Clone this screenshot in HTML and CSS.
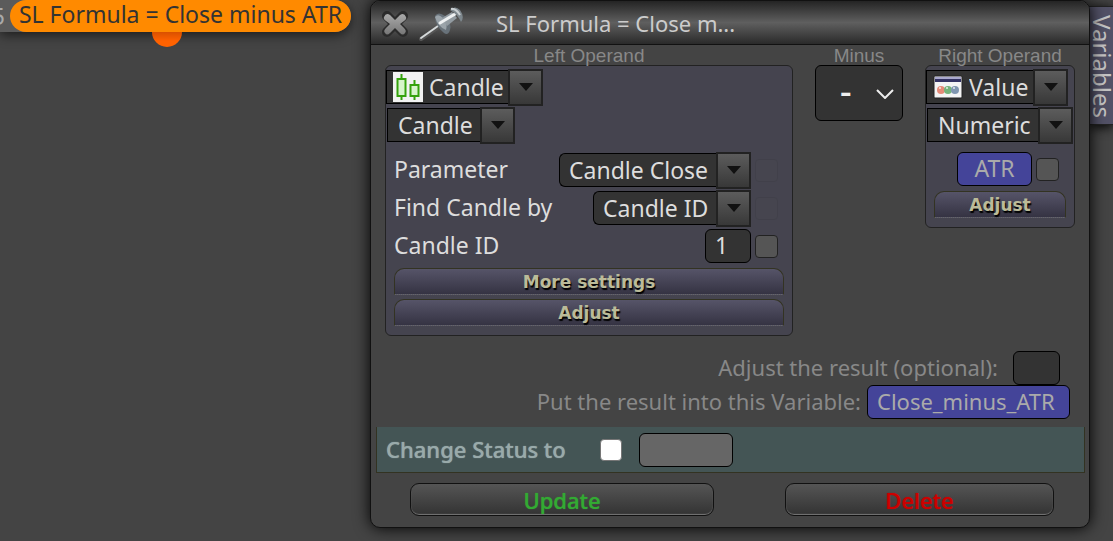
FILE: index.html
```
<!DOCTYPE html>
<html lang="en">
<head>
  <meta charset="UTF-8" />
  <meta name="viewport" content="width=device-width, initial-scale=1" />
  <title>SL Formula = Close minus ATR</title>
  <link rel="stylesheet" href="styles.css">
</head>
<body>
  <!-- block on the canvas -->
  <div class="node">
    <span class="node-number">5</span>
    <span class="node-name">SL Formula = Close minus ATR</span>
    <span class="node-port"></span>
  </div>

  <button class="side-tab">Variables</button>

  <form class="dialog">
    <header class="titlebar">
      <button type="button" class="icon-btn" aria-label="Close">
        <svg width="30" height="32" viewBox="0 0 30 32">
          <defs>
            <linearGradient id="crossFill" x1="0" y1="0" x2="0" y2="1">
              <stop offset="0" stop-color="#aaa" />
              <stop offset="1" stop-color="#777" />
            </linearGradient>
          </defs>
          <path d="M7 9L23 25M23 9L7 25" stroke="#2b2b2b" stroke-width="10" stroke-linecap="round" />
          <path d="M4 10Q6 5 10 8L15 13L20 8Q24 5 26 10Q27 12 24 14L20 17L24 21Q27 24 25 26Q23 29 20 26L15 21L10 26Q7 29 5 26Q3 24 6 21L10 17L6 14Q3 12 4 10Z" fill="url(#crossFill)" />
        </svg>
      </button>
      <button type="button" class="icon-btn" aria-label="Pin">
        <svg width="46" height="36" viewBox="0 0 46 36">
          <path d="M3 34L19 23" stroke="#555" stroke-width="4" stroke-linecap="round" />
          <path d="M3 33L20 21" stroke="#d5d9da" stroke-width="2" stroke-linecap="round" />
          <path d="M17 11Q20 6 27 11Q34 18 32 25Q30 31 26 28Q17 21 17 11Z" fill="#68727a" />
          <path d="M17 12Q20 8 25 13Q30 18 28 25Q20 22 17 12Z" fill="#9aa3a9" />
          <path d="M24 13L34 7L39 13L29 21Z" fill="#929ba1" />
          <path d="M22 18L37 9" stroke="#eef1f2" stroke-width="3" stroke-linecap="round" />
          <path d="M32 5Q37 0 42 5Q47 12 43 17Q40 10 32 5Z" fill="#7d878d" />
          <path d="M33 4Q38 3 42 10" stroke="#c8ced1" stroke-width="2" fill="none" />
        </svg>
      </button>
      <h1 class="title">SL Formula = Close m...</h1>
    </header>

    <div class="operands">
      <section class="operand operand-left">
        <h2 class="caption">Left Operand</h2>
        <div class="panel">
          <div class="combo combo-type">
            <svg width="30" height="30" viewBox="0 0 30 30">
              <rect width="30" height="30" fill="#f2f2f2" />
              <path d="M8.500 2V28M21.500 8V28" stroke="#35a20d" stroke-width="2" />
              <rect x="4.500" y="7" width="8" height="17" fill="#d7f5cb" stroke="#35a20d" stroke-width="2" />
              <rect x="17.500" y="13" width="8" height="11" fill="#d7f5cb" stroke="#35a20d" stroke-width="2" />
            </svg>
            <select class="combo-value" aria-label="Left operand type"><option>Candle</option></select>
            <button type="button" class="combo-arrow" aria-label="Open list"></button>
          </div>
          <div class="combo combo-sub">
            <select class="combo-value" aria-label="Left operand value"><option>Candle</option></select>
            <button type="button" class="combo-arrow" aria-label="Open list"></button>
          </div>

          <div class="fields">
            <div class="field">
              <label for="parameter">Parameter</label>
              <div class="combo rounded">
                <select class="combo-value" id="parameter"><option>Candle Close</option></select>
                <button type="button" class="combo-arrow" aria-label="Open list"></button>
              </div>
              <button type="button" class="var-toggle off" aria-label="Use variable"></button>
            </div>
            <div class="field">
              <label for="findBy">Find Candle by</label>
              <div class="combo rounded">
                <select class="combo-value" id="findBy"><option>Candle ID</option></select>
                <button type="button" class="combo-arrow" aria-label="Open list"></button>
              </div>
              <button type="button" class="var-toggle off" aria-label="Use variable"></button>
            </div>
            <div class="field">
              <label for="candleId">Candle ID</label>
              <input class="box box-id" type="text" id="candleId" value="1" />
              <button type="button" class="var-toggle" aria-label="Use variable"></button>
            </div>
          </div>

          <button type="button" class="bar-btn">More settings</button>
          <button type="button" class="bar-btn">Adjust</button>
        </div>
      </section>

      <section class="operand">
        <h2 class="caption"><label for="operator">Minus</label></h2>
        <div class="operator">
          <select id="operator"><option>-</option></select>
          <svg class="chevron" width="18" height="10" viewBox="0 0 18 10">
            <path d="M1 1L9 9L17 1" fill="none" stroke="#eee" stroke-width="2" />
          </svg>
        </div>
      </section>

      <section class="operand operand-right">
        <h2 class="caption">Right Operand</h2>
        <div class="panel">
          <div class="combo combo-type">
            <svg width="30" height="24" viewBox="0 0 30 24">
              <rect x="1" y="1" width="28" height="22" rx="1" fill="#f4f4f4" stroke="#222" />
              <rect x="2" y="2" width="26" height="2" fill="#aaa9ce" />
              <rect x="2" y="4" width="26" height="3" fill="#343363" />
              <circle cx="8" cy="15" r="4" fill="#e58a78" />
              <circle cx="15" cy="15" r="4" fill="#74b37a" />
              <circle cx="22" cy="15" r="4" fill="#8096b0" />
              <path d="M6 13H8M13 13H15M20 13H22" stroke="#fff" stroke-opacity=".6" stroke-width="2" />
            </svg>
            <select class="combo-value" aria-label="Right operand type"><option>Value</option></select>
            <button type="button" class="combo-arrow" aria-label="Open list"></button>
          </div>
          <div class="combo combo-sub">
            <select class="combo-value" aria-label="Right operand value"><option>Numeric</option></select>
            <button type="button" class="combo-arrow" aria-label="Open list"></button>
          </div>
          <div class="fields">
            <div class="field">
              <input class="box box-var box-atr" type="text" value="ATR" aria-label="Value" />
              <button type="button" class="var-toggle" aria-label="Use variable"></button>
            </div>
          </div>
          <button type="button" class="bar-btn">Adjust</button>
        </div>
      </section>
    </div>

    <div class="results">
      <div class="result-row result-adjust">
        <label for="adjustResult">Adjust the result (optional):</label>
        <input class="box box-adjust" type="text" id="adjustResult" />
      </div>
      <div class="result-row">
        <label for="resultVar">Put the result into this Variable:</label>
        <input class="box box-var box-result" type="text" id="resultVar" value="Close_minus_ATR" />
      </div>
    </div>

    <div class="status">
      <label for="changeStatus">Change Status to</label>
      <input type="checkbox" id="changeStatus" />
      <input class="box box-status" type="text" aria-label="Status" disabled />
    </div>

    <footer class="actions">
      <button type="submit" class="action update">Update</button>
      <button type="button" class="action delete">Delete</button>
    </footer>
  </form>
</body>
</html>
```
FILE: styles.css
```
* {
  box-sizing: border-box;
}
body {
  margin: 0;
  min-height: 100vh;
  background: #444;
  color: #ddd;
  font-family: 'Noto Sans', sans-serif;
  font-size: 23px;
  line-height: 32px;
  overflow: hidden;
}
button,
input,
select {
  font: inherit;
  color: inherit;
  margin: 0;
  padding: 0;
}
h1,
h2 {
  margin: 0;
  font-weight: 400;
}

/* canvas */
.node {
  position: absolute;
  top: 0;
  left: 0;
  display: flex;
  width: 351px;
  height: 32px;
  background: #5b5b5b;
  border-radius: 0 16px 16px 0;
  box-shadow: 0 3px 12px rgba(0, 0, 0, 0.6);
}
.node-number {
  width: 10px;
  color: #aaa;
  direction: rtl;
  padding-right: 5px;
}
.node-name {
  position: relative;
  z-index: 1;
  flex: 1;
  background: #ff8a00;
  color: #333;
  border-radius: 16px;
  line-height: 28px;
  text-align: center;
  white-space: nowrap;
}
.node-port {
  position: absolute;
  top: 32px;
  left: 152px;
  width: 30px;
  height: 15px;
  border-radius: 0 0 15px 15px;
  background: linear-gradient(#d95000, #ff6200 60%);
}
.side-tab {
  position: absolute;
  top: 6px;
  right: 0;
  width: 24px;
  height: 119px;
  border: 1px solid #222;
  border-width: 1px 0;
  background: #525166;
  color: #c5c5c5;
  font-size: 24px;
  line-height: 22px;
  writing-mode: vertical-rl;
  text-align: center;
  padding: 6px 0 4px 2px;
  box-shadow: 0 2px 12px #000;
}

/* dialog */
.dialog {
  position: absolute;
  top: 0;
  left: 370px;
  right: 23px;
  background: #444;
  border: 1px solid #111;
  border-radius: 10px;
  box-shadow: 0 0 16px #000;
}
.titlebar {
  display: flex;
  align-items: center;
  height: 44px;
  padding-left: 9px;
  border-bottom: 1px solid #111;
  border-radius: 9px 9px 0 0;
  background: linear-gradient(#242424, #5f5f5f 50%, #2a2a2a);
}
.icon-btn {
  display: flex;
  margin-right: 8px;
  border: 0;
  background: none;
}
.title {
  margin-left: 24px;
  font-size: 22px;
  color: #ccc;
}
.operands {
  display: flex;
  justify-content: space-between;
  align-items: flex-start;
  padding: 0 14px;
}
.operand-left {
  width: 408px;
}
.operand-right {
  width: 150px;
}
.caption {
  height: 20px;
  font-family: 'Liberation Sans', Arial, sans-serif;
  font-size: 19px;
  line-height: 21px;
  text-align: center;
  color: #888;
}
.panel {
  border: 1px solid #222;
  border-radius: 6px;
  background: #45444f;
  padding: 2px 0 9px;
}

.combo {
  display: flex;
  align-items: center;
  width: max-content;
  height: 38px;
}
.combo-value {
  appearance: none;
  height: 34px;
  border: 1px solid #000;
  border-right: 0;
  background: #333;
  color: #ddd;
  padding: 0 7px 0 10px;
}
.combo-arrow {
  width: 35px;
  height: 37px;
  border: 2px solid #222;
  background: linear-gradient(#5c5c5c, #383838);
  display: grid;
  place-items: center;
}
.combo-arrow::before {
  content: '';
  border: 7px solid transparent;
  border-top: 8px solid #111;
  border-bottom: 0;
}
.combo-type {
  position: relative;
}
.combo-type svg {
  position: absolute;
  left: 7px;
}
.combo-type .combo-value {
  padding: 0 4px 0 42px;
}
.combo-sub {
  margin-left: 1px;
}
.rounded .combo-value {
  padding-left: 9px;
  border-radius: 6px 0 0 6px;
}

.fields {
  padding: 7px 14px 3px 8px;
}
.field {
  display: flex;
  align-items: center;
  justify-content: flex-end;
  height: 38px;
}
.field label {
  margin-right: auto;
  padding-bottom: 2px;
}
.var-toggle {
  width: 23px;
  height: 23px;
  margin-left: 4px;
  border: 1px solid #222;
  border-radius: 4px;
  background: #555;
}
.var-toggle.off {
  opacity: 0.1;
}
.box {
  height: 34px;
  border: 1px solid #000;
  border-radius: 6px;
  background: #333;
  padding: 0 9px 2px;
}
.box-id {
  width: 46px;
}
.box-var {
  background: #449;
  color: #aaa;
}
.box-atr {
  width: 75px;
  text-align: center;
}
.operand-right .fields {
  padding: 6px 15px 3px 0;
}
.bar-btn {
  display: block;
  width: calc(100% - 16px);
  height: 27px;
  margin: 0 8px 4px;
  border: 1px solid #332;
  border-bottom: 1px dotted #666;
  border-radius: 10px 10px 0 0;
  background: linear-gradient(#565468, #353343);
  color: #bb9;
  font-family: 'DejaVu Sans', sans-serif;
  font-size: 17px;
  font-weight: 700;
  line-height: 24px;
  text-shadow: 1px 2px 1px #000;
}
.bar-btn:last-child {
  margin-bottom: 0;
}

.operator {
  position: relative;
  width: 88px;
  height: 56px;
}
.operator select {
  appearance: none;
  width: 100%;
  height: 100%;
  border: 1px solid #000;
  border-radius: 6px;
  background: #333;
  color: #eee;
  padding: 0 0 4px 24px;
  font-size: 36px;
  font-weight: 500;
}
.chevron {
  position: absolute;
  top: 24px;
  right: 9px;
}

.results {
  padding: 15px 19px 0 0;
  font-size: 22px;
  color: #888;
}
.result-row {
  display: flex;
  justify-content: flex-end;
  align-items: center;
  gap: 6px;
}
.result-row label {
  padding-bottom: 2px;
}
.result-adjust {
  gap: 15px;
  padding-right: 10px;
}
.box-adjust {
  width: 47px;
}
.box-result {
  width: 203px;
}
.status {
  display: flex;
  align-items: center;
  height: 46px;
  margin: 8px 4px 0 5px;
  padding: 0 9px;
  border: 1px solid #332;
  border-top: 0;
  background: #455;
  color: #9aa;
}
.status label {
  padding-bottom: 2px;
  font-size: 22px;
  font-weight: 500;
  text-shadow: 0 0 1px #9aa;
}
.status input[type="checkbox"] {
  appearance: none;
  width: 22px;
  height: 22px;
  margin: 0 17px 0 34px;
  border: 1px solid #767676;
  border-radius: 4px;
  background: #fff;
}
.status input[type="checkbox"]:checked {
  background: #3a3;
}
.box-status {
  width: 94px;
  background: #666;
}
.actions {
  display: flex;
  justify-content: space-between;
  padding: 10px 35px 11px 39px;
}
.action {
  width: 304px;
  height: 33px;
  border: 1px solid #111;
  border-radius: 9px;
  background: linear-gradient(#555, #333);
  box-shadow: inset 0 -1px 1px #777;
  font-size: 22px;
  font-weight: 500;
  line-height: 30px;
}
.update {
  color: #3a3;
  text-shadow: 0 0 1px #3a3;
}
.delete {
  width: 269px;
  color: #c00;
  text-shadow: 0 0 1px #c00;
}
```
